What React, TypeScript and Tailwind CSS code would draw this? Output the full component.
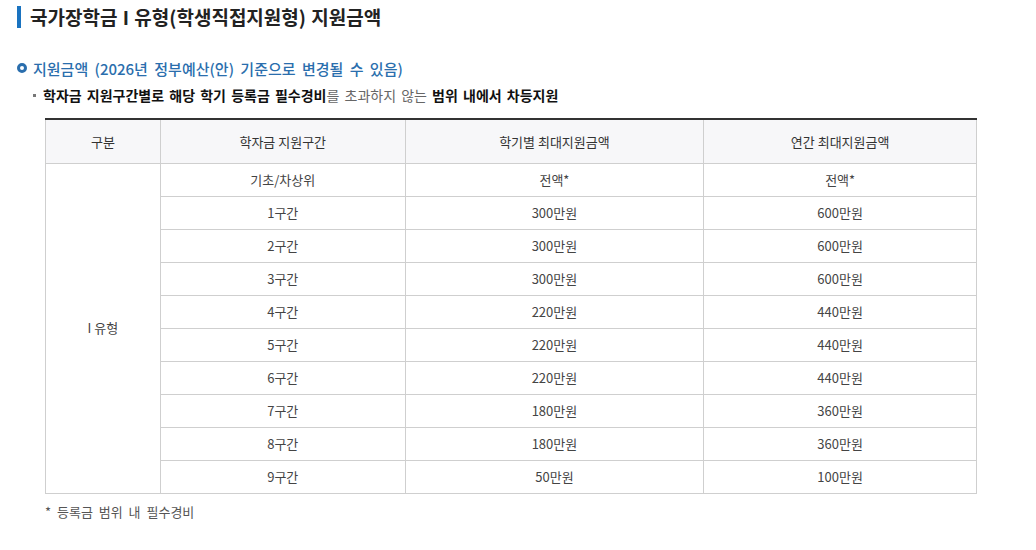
import React from "react";

const rows = [
  ["기초/차상위", "전액*", "전액*"],
  ["1구간", "300만원", "600만원"],
  ["2구간", "300만원", "600만원"],
  ["3구간", "300만원", "600만원"],
  ["4구간", "220만원", "440만원"],
  ["5구간", "220만원", "440만원"],
  ["6구간", "220만원", "440만원"],
  ["7구간", "180만원", "360만원"],
  ["8구간", "180만원", "360만원"],
  ["9구간", "50만원", "100만원"],
];

export default function App() {
  return (
    <div
      className="w-[1036px] h-[550px] bg-white text-[#333]"
      style={{ fontFamily: '"Noto Sans CJK KR", "Noto Sans", sans-serif' }}
    >
      <div className="pl-[17px] pt-[5px]">
        <div className="flex items-center h-[23px]">
          <div className="w-[4px] h-[22px] bg-[#1a73c0]" />
          <h1 className="ml-[9px] text-[19px] font-bold text-[#222] leading-none [word-spacing:1px]">
            국가장학금 I 유형(학생직접지원형) 지원금액
          </h1>
        </div>

        <div className="mt-[30px] flex items-center h-[20px]">
          <div className="w-[10px] h-[10px] rounded-full border-[3px] border-[#2a6ead]" />
          <span className="ml-[6px] text-[15px] font-medium text-[#2a6ead] leading-none [word-spacing:3px]">
            지원금액 (2026년 정부예산(안) 기준으로 변경될 수 있음)
          </span>
        </div>

        <div className="mt-[8px] ml-[16px] flex items-center h-[18px]">
          <div className="w-[3px] h-[3px] bg-[#777]" />
          <span className="ml-[7px] text-[14px] leading-none text-[#111] [word-spacing:2px]">
            <b>학자금 지원구간별로 해당 학기 등록금 필수경비</b>
            <span className="text-[#666]">를 초과하지 않는 </span>
            <b>범위 내에서 차등지원</b>
          </span>
        </div>

        <div className="mt-[14px] ml-[28px] w-[932px]">
          <table className="w-full border-collapse text-[13px] text-[#444] border-t-2 border-t-[#333]">
            <colgroup>
              <col className="w-[115px]" />
              <col className="w-[245px]" />
              <col className="w-[299px]" />
              <col className="w-[273px]" />
            </colgroup>
            <thead>
              <tr className="bg-[#f7f7f9] h-[44px]">
                {["구분", "학자금 지원구간", "학기별 최대지원금액", "연간 최대지원금액"].map((h) => (
                  <th key={h} className="font-normal text-[#333] border border-[#cfcfcf] border-t-0 text-center">
                    {h}
                  </th>
                ))}
              </tr>
            </thead>
            <tbody>
              {rows.map((r, i) => (
                <tr key={i} className="h-[33px]">
                  {i === 0 && (
                    <td rowSpan={10} className="border border-[#cfcfcf] text-center">
                      I 유형
                    </td>
                  )}
                  {r.map((c, j) => (
                    <td key={j} className="border border-[#cfcfcf] text-center">
                      {c}
                    </td>
                  ))}
                </tr>
              ))}
            </tbody>
          </table>
          <p className="mt-[8px] text-[13px] text-[#555] [word-spacing:3px]">* 등록금 범위 내 필수경비</p>
        </div>
      </div>
    </div>
  );
}
